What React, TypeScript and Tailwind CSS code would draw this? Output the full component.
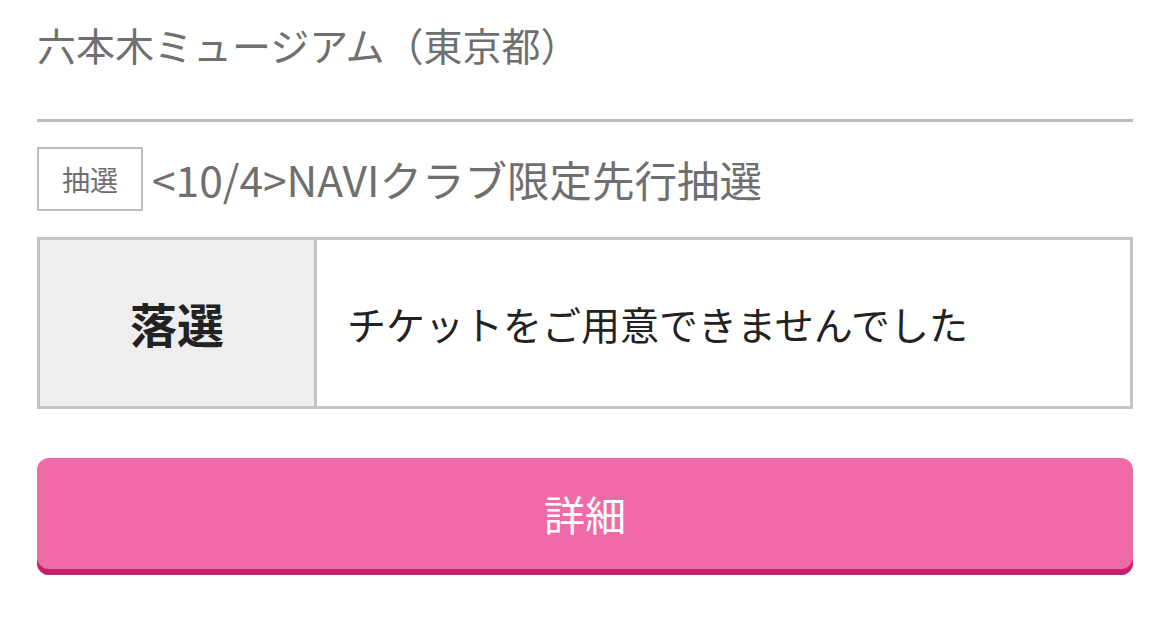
import React from "react";

export default function App() {
  const font = { fontFamily: '"Noto Sans CJK JP", "Noto Sans", sans-serif' };
  return (
    <div className="min-h-[625px] w-full bg-white" style={font}>
      <div className="pl-[37px] pr-[36px] pt-[16px]">
        <div className="text-[39px] leading-[56px] text-[#6f6f6f]">六本木ミュージアム（東京都）</div>
        <div className="mt-[47px] h-[3px] bg-[#bdbdbd]" />
        <div className="mt-[25px] flex items-center gap-[9px]">
          <div className="flex h-[64px] w-[106px] items-center justify-center border-2 border-[#bdbdbd] text-[28px] leading-none text-[#6f6f6f]">
            抽選
          </div>
          <div className="text-[42.5px] leading-[64px] text-[#6f6f6f]">&lt;10/4&gt;NAVIクラブ限定先行抽選</div>
        </div>
        <div className="mt-[26px] flex h-[172px] border-[3px] border-[#c4c4c4]">
          <div className="flex w-[277px] items-center justify-center border-r-[3px] border-[#c4c4c4] bg-[#eeeeee] text-[47px] font-bold text-[#222222]">
            落選
          </div>
          <div className="flex flex-1 items-center pl-[30px] text-[39px] text-[#222222]">
            チケットをご用意できませんでした
          </div>
        </div>
        <div className="mt-[49px] flex h-[117px] items-center justify-center rounded-[12px] bg-[#f06aa8] pb-[6px] text-[41px] text-white shadow-[inset_0_-6px_0_#c51f6d]">
          詳細
        </div>
      </div>
    </div>
  );
}
